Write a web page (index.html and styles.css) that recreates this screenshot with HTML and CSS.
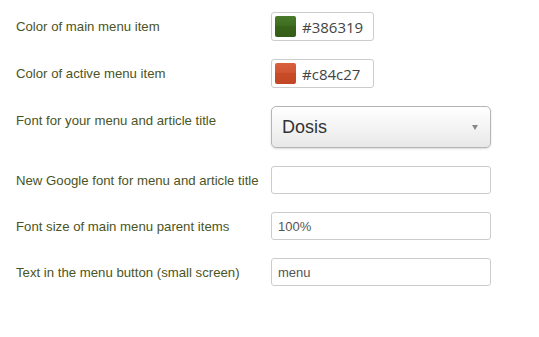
FILE: index.html
```html
<!DOCTYPE html>
<html lang="en">
<head>
    <meta charset="UTF-8">
    <title>Menu settings</title>
    <link rel="stylesheet" href="styles.css">
</head>
<body>
    <form class="settings">
        <div class="row">
            <label class="label">Color of main menu item</label>
            <div class="control">
                <span class="color-field">
                    <span class="swatch swatch-green"></span>
                    <span class="color-value">#386319</span>
                </span>
            </div>
        </div>
        <div class="row">
            <label class="label">Color of active menu item</label>
            <div class="control">
                <span class="color-field">
                    <span class="swatch swatch-red"></span>
                    <span class="color-value">#c84c27</span>
                </span>
            </div>
        </div>
        <div class="row">
            <label class="label">Font for your menu and article title</label>
            <div class="control">
                <div class="select">
                    <span>Dosis</span>
                    <span class="arrow"></span>
                </div>
            </div>
        </div>
        <div class="row">
            <label class="label">New Google font for menu and article title</label>
            <div class="control">
                <input class="text" type="text" value="">
            </div>
        </div>
        <div class="row">
            <label class="label">Font size of main menu parent items</label>
            <div class="control">
                <input class="text" type="text" value="100%">
            </div>
        </div>
        <div class="row">
            <label class="label">Text in the menu button (small screen)</label>
            <div class="control">
                <input class="text" type="text" value="menu">
            </div>
        </div>
    </form>
</body>
</html>
```

FILE: styles.css
```css
body {
    margin: 0;
    background: #fff;
    font-family: "Liberation Sans", Arial, sans-serif;
}

.settings {
    padding: 12px 0 0 16px;
}

.row {
    display: flex;
    margin-bottom: 18px;
}

.label {
    width: 255px;
    padding-top: 5px;
    font-size: 13.2px;
    line-height: 20px;
    color: #4a5424;
}

.control {
    flex: none;
}

/* color picker field */
.color-field {
    display: flex;
    align-items: center;
    width: 98px;
    height: 27px;
    border: 1px solid #ccc;
    border-radius: 3px;
    padding-left: 3px;
    box-sizing: content-box;
}

.swatch {
    width: 21px;
    height: 21px;
    border-radius: 2px;
    margin-right: 6px;
}

.swatch-green {
    background: linear-gradient(#4a7a2a 0, #3f6e22 45%, #386319 50%, #345d17 100%);
}

.swatch-red {
    background: linear-gradient(#d8603b 0, #d15634 45%, #c84c27 50%, #c24724 100%);
}

.color-value {
    font-family: "Open Sans", sans-serif;
    font-size: 15px;
    color: #444;
}

/* select box */
.select {
    display: flex;
    align-items: center;
    justify-content: space-between;
    width: 198px;
    height: 40px;
    padding: 0 10px;
    border: 1px solid #b5b5b5;
    border-radius: 5px;
    background: linear-gradient(#fff, #f4f4f4 50%, #e8e8e8);
    box-shadow: 0 1px 2px rgba(0, 0, 0, 0.15);
    font-family: "Liberation Sans", Arial, sans-serif;
    font-size: 18px;
    color: #333;
}

.arrow {
    width: 0;
    height: 0;
    border-left: 3px solid transparent;
    border-right: 3px solid transparent;
    border-top: 5px solid #888;
    margin-right: 2px;
}

.text {
    width: 220px;
    height: 28px;
    box-sizing: border-box;
    border: 1px solid #ccc;
    border-radius: 3px;
    padding: 0 6px;
    font-family: "Liberation Sans", Arial, sans-serif;
    font-size: 13px;
    color: #555;
    outline: none;
}
```
